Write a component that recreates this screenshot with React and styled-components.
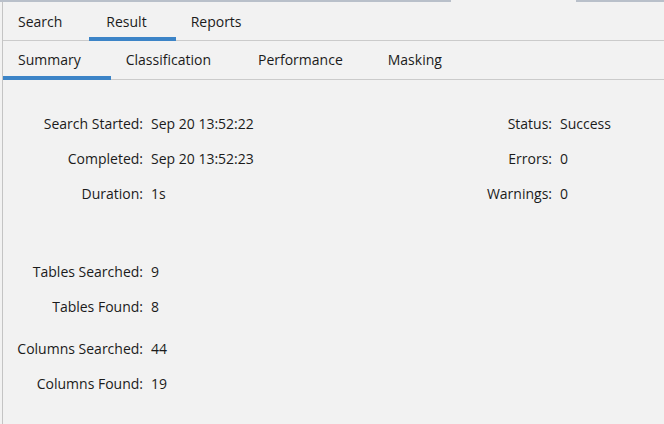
import React from "react";
import styled, { createGlobalStyle } from "styled-components";

const GlobalStyle = createGlobalStyle`
  html, body {
    margin: 0;
    padding: 0;
    background: #f2f2f2;
  }
  body {
    font-family: "Open Sans", "Noto Sans", sans-serif;
    font-size: 14px;
    color: #1b1b1b;
  }
`;

const Window = styled.div`
  width: 664px;
  height: 424px;
  overflow: hidden;
  display: flex;
  flex-direction: column;
  background: #f2f2f2;
`;

const TopStrip = styled.div`
  display: flex;
  height: 2px;
  flex: none;
`;

const StripSegment = styled.div`
  width: ${p => p.$width}px;
  flex: ${p => (p.$width ? "none" : "1")};
  background: ${p => (p.$lit ? "#b9c0ca" : "transparent")};
`;

const Frame = styled.div`
  flex: 1;
  margin-left: 2px;
  border-left: 1px solid #c4c4c4;
  display: flex;
  flex-direction: column;
`;

const TabBar = styled.div`
  display: flex;
  height: 38px;
  border-bottom: 1px solid #cbcbcb;
  flex: none;
`;

const Tab = styled.div`
  box-sizing: border-box;
  height: 39px;
  margin-bottom: -1px;
  padding: ${p => p.$top}px ${p => p.$right}px 0 ${p => p.$left}px;
  line-height: 19px;
  white-space: nowrap;
  border-bottom: 4px solid ${p => (p.$active ? "#3c84c7" : "transparent")};
  cursor: default;
`;

const Body = styled.div`
  flex: 1;
  display: flex;
  padding-top: 26px;
`;

const Column = styled.div`
  width: ${p => p.$width}px;
  flex: none;
  display: flex;
  flex-direction: column;
`;

const Group = styled.div`
  display: grid;
  grid-template-columns: ${p => p.$labelWidth}px auto;
  column-gap: 8px;
  margin-top: ${p => p.$gap || 0}px;
`;

const Label = styled.div`
  text-align: right;
  line-height: 35px;
  white-space: nowrap;
`;

const Value = styled.div`
  line-height: 35px;
  white-space: nowrap;
`;

const mainTabs = [
  { name: "Search", left: 15, right: 27 },
  { name: "Result", left: 17, right: 29, active: true },
  { name: "Reports", left: 15, right: 27 },
];

const subTabs = [
  { name: "Summary", right: 30, active: true },
  { name: "Classification", right: 32 },
  { name: "Performance", right: 30 },
  { name: "Masking", right: 30 },
];

const timing = [
  ["Search Started:", "Sep 20 13:52:22"],
  ["Completed:", "Sep 20 13:52:23"],
  ["Duration:", "1s"],
];

const outcome = [
  ["Status:", "Success"],
  ["Errors:", "0"],
  ["Warnings:", "0"],
];

const tables = [
  ["Tables Searched:", "9"],
  ["Tables Found:", "8"],
];

const columns = [
  ["Columns Searched:", "44"],
  ["Columns Found:", "19"],
];

function Fields({ rows, labelWidth, gap }) {
  return (
    <Group $labelWidth={labelWidth} $gap={gap}>
      {rows.map(([label, value]) => (
        <React.Fragment key={label}>
          <Label>{label}</Label>
          <Value>{value}</Value>
        </React.Fragment>
      ))}
    </Group>
  );
}

export default function App() {
  return (
    <>
      <GlobalStyle />
      <Window>
        <TopStrip>
          <StripSegment $width={451} $lit />
          <StripSegment $width={125} />
          <StripSegment $lit />
        </TopStrip>
        <Frame>
          <TabBar>
            {mainTabs.map(t => (
              <Tab key={t.name} $top={10} $left={t.left} $right={t.right} $active={t.active}>
                {t.name}
              </Tab>
            ))}
          </TabBar>
          <TabBar>
            {subTabs.map(t => (
              <Tab key={t.name} $top={9} $left={15} $right={t.right} $active={t.active}>
                {t.name}
              </Tab>
            ))}
          </TabBar>
          <Body>
            <Column $width={449}>
              <Fields rows={timing} labelWidth={140} />
              <Fields rows={tables} labelWidth={140} gap={43} />
              <Fields rows={columns} labelWidth={140} gap={7} />
            </Column>
            <Column $width={212}>
              <Fields rows={outcome} labelWidth={100} />
            </Column>
          </Body>
        </Frame>
      </Window>
    </>
  );
}
